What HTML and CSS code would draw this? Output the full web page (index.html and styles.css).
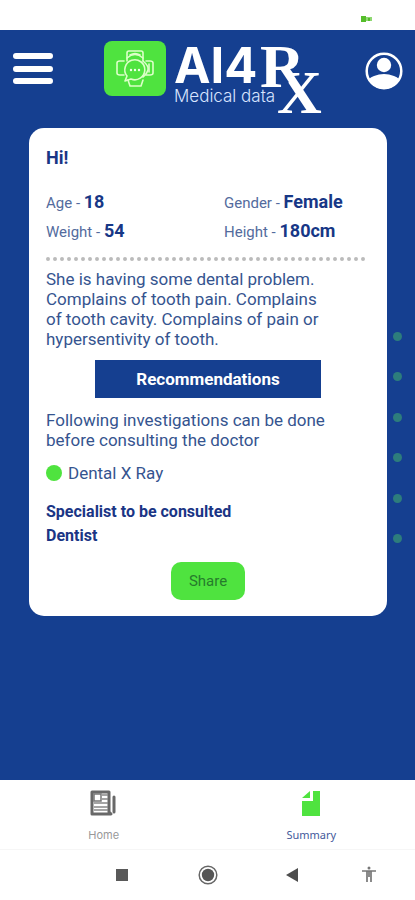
FILE: index.html
```html
<!DOCTYPE html>
<html lang="en">
<head>
<meta charset="utf-8">
<meta name="viewport" content="width=device-width, initial-scale=1">
<title>AI4Rx Medical data</title>
<link rel="stylesheet" href="styles.css">
</head>
<body>
<div class="status">
  <svg width="12" height="6" viewBox="0 0 12 6" aria-hidden="true"><path d="M0 0h5v6H0z" fill="#55bd2b"/><path d="M5 1h6v4H5z" fill="#8fd872"/><path d="M7 2h2v3H7z" fill="#55bd2b"/></svg>
</div>
<header class="header">
  <button class="icon-button" aria-label="Menu">
    <svg width="42" height="34" viewBox="0 0 42 34"><path d="M4 4h34M4 17h34M4 29h34" stroke="#fff" stroke-width="6" stroke-linecap="round"/></svg>
  </button>
  <div class="brand">
    <svg class="brand-mark" width="62" height="55" viewBox="0 0 62 55" aria-hidden="true">
      <rect width="62" height="55" rx="8" fill="#4fe33f"/>
      <g fill="none" stroke="#dcffc8" stroke-width="1.6" stroke-linejoin="round" stroke-linecap="round">
        <path d="M23 20v-8q0-2 2-2h12q2 0 2 2v8"/>
        <path d="M20 20h-4q-3 0-3 2v10q0 2 3 2h4M42 20h4q3 0 3 2v10q0 2-3 2h-4M45 23v8"/>
        <path d="M24 39l2 6h11l2-6"/>
        <path d="M23 17q8-7 16 0M26 14q5-3 10 0"/>
        <path d="M23 35a10 10 0 1 1 4 3l-6 2z"/>
        <path d="M39 20q6 5 5 9t-5 7"/>
      </g>
      <g fill="#efffe8"><circle cx="27" cy="29" r="1.2"/><circle cx="31" cy="29" r="1.2"/><circle cx="35" cy="29" r="1.2"/></g>
    </svg>
    <svg class="wordmark" width="152" height="80" viewBox="0 0 152 80" fill="#fff">
      <defs>
        <clipPath id="r-clip"><path d="M80 0h70v34h-34v20H80z"/></clipPath>
        <clipPath id="x-clip"><path d="M115 28h37v52h-50V55l13-12z"/></clipPath>
      </defs>
      <text class="word-main" x="0" y="44">AI4</text>
      <text class="word-sub" x="0" y="63">Medical data</text>
      <g clip-path="url(#r-clip)"><text class="word-rx" x="86" y="48">R</text></g>
      <g clip-path="url(#x-clip)"><text class="word-rx" x="103" y="74">X</text></g>
    </svg>
  </div>
  <button class="icon-button" aria-label="Profile">
    <svg width="38" height="38" viewBox="0 0 38 38"><circle cx="19" cy="19" r="17.300" fill="none" stroke="#fff" stroke-width="2.500"/><circle cx="19" cy="13" r="7.200" fill="#fff"/><path d="M4 27q2-2 5-3 10-4 20 0 3 1 5 3-5 10-15 10T4 27z" fill="#fff"/></svg>
  </button>
</header>
<main class="main">
  <article class="card">
    <h1 class="greeting">Hi!</h1>
    <dl class="facts">
      <div><dt>Age - </dt><dd>18</dd></div>
      <div><dt>Gender - </dt><dd>Female</dd></div>
      <div><dt>Weight - </dt><dd>54</dd></div>
      <div><dt>Height - </dt><dd>180cm</dd></div>
    </dl>
    <svg class="rule" height="4" aria-hidden="true"><line class="rule-line" x1="2" y1="2" x2="100%" y2="2"/></svg>
    <p class="copy">She is having some dental problem. Complains of tooth pain. Complains of tooth cavity. Complains of pain or hypersentivity of tooth.</p>
    <h2 class="banner">Recommendations</h2>
    <p class="copy">Following investigations can be done before consulting the doctor</p>
    <ul class="tests"><li>Dental X Ray</li></ul>
    <p class="specialist">Specialist to be consulted<br>Dentist</p>
    <button class="share">Share</button>
  </article>
  <div class="dots" aria-hidden="true"><i></i><i></i><i></i><i></i><i></i><i></i></div>
</main>
<nav class="tabs">
  <a class="tab" href="#home">
    <svg width="27" height="27" viewBox="0 0 27 27" aria-hidden="true"><path d="M2 2h17v20l2 2H2z" fill="#fff" stroke="#686868" stroke-width="3" stroke-linejoin="round"/><path d="M4 4h7v7H4z" fill="#fff" stroke="#777" stroke-width="1.5"/><path d="M12 5h6M12 9h6M4 13h14M4 17h14M4 20h14" stroke="#888" stroke-width="1.7"/><path d="M24 7v15" stroke="#686868" stroke-width="3" stroke-linecap="round"/></svg>
    <span>Home</span>
  </a>
  <a class="tab active" href="#summary" aria-current="page">
    <svg width="18" height="27" viewBox="0 0 18 27" aria-hidden="true"><path d="M8 1v7H0zM11 1h7v25H0V11h11z" fill="#4fe33f"/></svg>
    <span>Summary</span>
  </a>
</nav>
<footer class="system">
  <button class="icon-button" aria-label="Recent apps"><svg width="20" height="20" viewBox="0 0 20 20"><path d="M4 4h12v12H4z" fill="#595959"/></svg></button>
  <button class="icon-button" aria-label="Home screen"><svg width="20" height="20" viewBox="0 0 20 20"><circle cx="10" cy="10" r="8.800" fill="none" stroke="#666" stroke-width="1.500"/><circle cx="10" cy="10" r="6.200" fill="#555"/></svg></button>
  <button class="icon-button" aria-label="Back"><svg width="20" height="20" viewBox="0 0 20 20"><path d="M4 10l12-7v14z" fill="#4d4d4d"/></svg></button>
  <button class="icon-button" aria-label="Accessibility"><svg width="20" height="20" viewBox="0 0 20 20"><circle cx="10" cy="3" r="1.500" fill="#777"/><path d="M3 6h14M8 6v11M12 6v11M10 6v6" stroke="#777" stroke-width="1.700"/></svg></button>
</footer>
</body>
</html>
```
FILE: styles.css
```css
* { box-sizing: border-box; }

body {
  margin: 0;
  min-height: 100vh;
  display: flex;
  flex-direction: column;
  background: #153f90;
  color: #35548f;
  font-family: Roboto, "Liberation Sans", sans-serif;
  font-size: 17px;
  line-height: 20px;
}

h1, h2, p, dl, dd, ul { margin: 0; padding: 0; }

svg { display: block; }

.icon-button {
  padding: 0;
  border: 0;
  background: none;
}

.status {
  height: 30px;
  padding: 16px 42px 0 0;
  display: flex;
  justify-content: flex-end;
  background: #fff;
}

.header {
  height: 98px;
  padding: 9px 12px 0;
  display: flex;
  align-items: flex-start;
}

.header > .icon-button { margin-top: 13px; }

.brand {
  flex: 1;
  padding-left: 10px;
  display: flex;
  justify-content: center;
  gap: 8px;
}

.brand-mark { margin-top: 2px; }

.wordmark { overflow: visible; }

.word-main { font: 700 49px Inter, sans-serif; }
.word-sub { font: 300 17px Inter, sans-serif; fill: #d8e4ff; }
.word-rx { font: 700 62px "Liberation Serif", serif; }

.main {
  position: relative;
  flex: 1;
  padding: 0 28px 24px 29px;
}

.card {
  padding: 20px 17px 16px;
  display: flex;
  flex-direction: column;
  border-radius: 15px;
  background: #fff;
}

.greeting {
  color: #1a3585;
  font-size: 18px;
  font-weight: 700;
}

.facts {
  margin-top: 24px;
  display: grid;
  grid-template-columns: 178px 1fr;
  row-gap: 8px;
}

.facts dt {
  display: inline;
  color: #536b9d;
  font-size: 15px;
}

.facts dd {
  display: inline;
  color: #173786;
  font-size: 18px;
  font-weight: 700;
}

.rule {
  width: 100%;
  margin: 15px 0 8px;
  overflow: visible;
}

.rule-line {
  stroke: #bbb;
  stroke-width: 4;
  stroke-linecap: round;
  stroke-dasharray: 0 7;
}

.copy { max-width: 290px; }

.banner {
  width: 70%;
  margin: 11px auto 12px;
  padding: 8px;
  background: #153f90;
  color: #fff;
  font-size: 17px;
  font-weight: 700;
  line-height: 22px;
  text-align: center;
}

.tests {
  margin: 13px 0 17px;
  list-style: none;
}

.tests li {
  display: flex;
  align-items: center;
  gap: 6px;
}

.tests li::before {
  content: "";
  width: 16px;
  height: 16px;
  border-radius: 50%;
  background: #4fe33f;
}

.specialist {
  color: #1a3585;
  font-size: 16px;
  font-weight: 700;
  line-height: 24px;
}

.share {
  align-self: center;
  width: 74px;
  height: 38px;
  margin-top: 14px;
  border: 0;
  border-radius: 10px;
  background: #4fe33f;
  color: #267b2c;
  font: 15px Roboto, sans-serif;
}

.dots {
  position: absolute;
  top: 204px;
  right: 13px;
  height: 211px;
  display: flex;
  flex-direction: column;
  justify-content: space-between;
}

.dots i {
  width: 9px;
  height: 9px;
  border-radius: 50%;
  background: #2d7d7c;
}

.tabs {
  height: 70px;
  padding-top: 10px;
  display: grid;
  grid-template-columns: 1fr 1fr;
  background: #fff;
  border-bottom: 1px solid #f6f6f6;
}

.tab {
  display: flex;
  flex-direction: column;
  align-items: center;
  gap: 8px;
  color: #999;
  font: 11px/20px Inter, sans-serif;
  text-decoration: none;
}

.tab.active {
  color: #44599b;
  font-family: "Noto Sans", sans-serif;
}

.system {
  height: 50px;
  padding: 0 36px 0 112px;
  display: grid;
  grid-template-columns: 86fr 84fr 77fr 20px;
  justify-items: start;
  align-items: center;
  background: #fff;
}
```
